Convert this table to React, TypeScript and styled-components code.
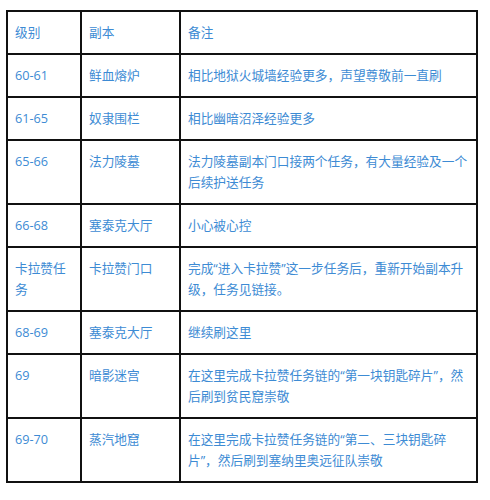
import React from "react";
import styled, { createGlobalStyle } from "styled-components";

const Global = createGlobalStyle`
  html, body { margin: 0; padding: 0; background: #fff; }
  body { width: 490px; height: 500px; overflow: hidden; }
`;

const Page = styled.div`
  padding: 10px 0 0 6px;
  background: #fff;
`;

const Table = styled.table`
  width: 472px;
  table-layout: fixed;
  border-collapse: collapse;
  border: 2px solid #111;
  font-family: "Open Sans", "Noto Sans CJK SC", sans-serif;
  font-size: 12.7px;
  line-height: 21px;
  color: #3d8bd4;
`;

const Col = styled.col<{ $w: number }>`
  width: ${(p) => p.$w}px;
`;

const Cell = styled.td`
  border: 2px solid #111;
  padding: 10px 6px 10px 7px;
  vertical-align: top;
  word-break: break-all;
`;

type Row = { level: string; dungeon: string; note: string[] };

const header: Row = { level: "级别", dungeon: "副本", note: ["备注"] };

const rows: Row[] = [
  { level: "60-61", dungeon: "鲜血熔炉", note: ["相比地狱火城墙经验更多，声望尊敬前一直刷"] },
  { level: "61-65", dungeon: "奴隶围栏", note: ["相比幽暗沼泽经验更多"] },
  {
    level: "65-66",
    dungeon: "法力陵墓",
    note: ["法力陵墓副本门口接两个任务，有大量经验及一个", "后续护送任务"],
  },
  { level: "66-68", dungeon: "塞泰克大厅", note: ["小心被心控"] },
  {
    level: "卡拉赞任务",
    dungeon: "卡拉赞门口",
    note: ["完成“进入卡拉赞”这一步任务后，重新开始副本升", "级，任务见链接。"],
  },
  { level: "68-69", dungeon: "塞泰克大厅", note: ["继续刷这里"] },
  {
    level: "69",
    dungeon: "暗影迷宫",
    note: ["在这里完成卡拉赞任务链的“第一块钥匙碎片”，然", "后刷到贫民窟崇敬"],
  },
  {
    level: "69-70",
    dungeon: "蒸汽地窟",
    note: ["在这里完成卡拉赞任务链的“第二、三块钥匙碎", "片”，然后刷到塞纳里奥远征队崇敬"],
  },
];

const Note = ({ lines }: { lines: string[] }) => (
  <>
    {lines.map((l, i) => (
      <React.Fragment key={i}>
        {i > 0 && <br />}
        {l}
      </React.Fragment>
    ))}
  </>
);

const TableRow = ({ row }: { row: Row }) => (
  <tr>
    <Cell>{row.level}</Cell>
    <Cell>{row.dungeon}</Cell>
    <Cell>
      <Note lines={row.note} />
    </Cell>
  </tr>
);

export default function App() {
  return (
    <>
      <Global />
      <Page>
        <Table>
          <colgroup>
            <Col $w={74} />
            <Col $w={99} />
            <Col $w={297} />
          </colgroup>
          <tbody>
            <TableRow row={header} />
            {rows.map((r, i) => (
              <TableRow key={i} row={r} />
            ))}
          </tbody>
        </Table>
      </Page>
    </>
  );
}
